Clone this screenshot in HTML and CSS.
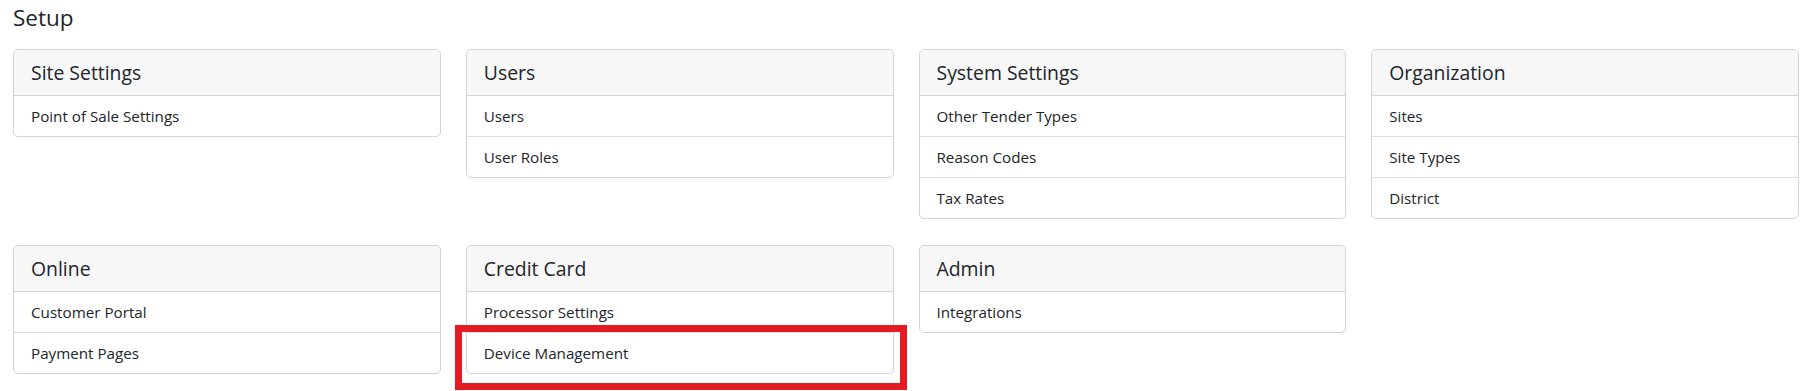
FILE: index.html
```html
<!DOCTYPE html>
<html>
<head>
<meta charset="utf-8">
<link rel="stylesheet" href="styles.css">
</head>
<body>
<div class="page">
  <h1 class="title">Setup</h1>
  <div class="grid">
    <div class="card">
      <div class="card-header">Site Settings</div>
      <ul class="list">
        <li class="item">Point of Sale Settings</li>
      </ul>
    </div>
    <div class="card">
      <div class="card-header">Users</div>
      <ul class="list">
        <li class="item">Users</li>
        <li class="item">User Roles</li>
      </ul>
    </div>
    <div class="card">
      <div class="card-header">System Settings</div>
      <ul class="list">
        <li class="item">Other Tender Types</li>
        <li class="item">Reason Codes</li>
        <li class="item">Tax Rates</li>
      </ul>
    </div>
    <div class="card">
      <div class="card-header">Organization</div>
      <ul class="list">
        <li class="item">Sites</li>
        <li class="item">Site Types</li>
        <li class="item">District</li>
      </ul>
    </div>
    <div class="card">
      <div class="card-header">Online</div>
      <ul class="list">
        <li class="item">Customer Portal</li>
        <li class="item">Payment Pages</li>
      </ul>
    </div>
    <div class="card">
      <div class="card-header">Credit Card</div>
      <ul class="list">
        <li class="item">Processor Settings</li>
        <li class="item item-highlight">Device Management<span class="highlight"></span></li>
      </ul>
    </div>
    <div class="card">
      <div class="card-header">Admin</div>
      <ul class="list">
        <li class="item">Integrations</li>
      </ul>
    </div>
  </div>
</div>
</body>
</html>
```

FILE: styles.css
```css
html, body {
  margin: 0;
  padding: 0;
  background: #ffffff;
}

body {
  font-family: "Open Sans", "Noto Sans", "Liberation Sans", sans-serif;
  color: #212529;
}

.page {
  padding: 0 14px 0 13px;
  min-height: 391px;
  box-sizing: border-box;
}

.title {
  margin: 0;
  padding: 4px 0 0 0;
  height: 49px;
  box-sizing: border-box;
  font-size: 22.5px;
  font-weight: 400;
  line-height: 28px;
}

.grid {
  display: grid;
  grid-template-columns: repeat(4, 1fr);
  column-gap: 25px;
  row-gap: 26px;
  align-items: start;
}

.card {
  border: 1px solid #d3d3d3;
  border-radius: 5px;
  background: #fff;
}

.card-header {
  height: 46px;
  box-sizing: border-box;
  display: flex;
  align-items: center;
  padding: 0 17px;
  background: #f7f7f7;
  border-bottom: 1px solid #d3d3d3;
  border-radius: 5px 5px 0 0;
  font-size: 19.4px;
}

.list {
  list-style: none;
  margin: 0;
  padding: 0;
}

.item {
  height: 40px;
  display: flex;
  align-items: center;
  padding: 0 17px;
  font-size: 15.2px;
}

.item + .item {
  border-top: 1px solid #dedede;
}

.item-highlight {
  position: relative;
}

.highlight {
  position: absolute;
  left: -12px;
  right: -14px;
  top: -8px;
  bottom: -17px;
  border: 7px solid #e31b23;
  pointer-events: none;
}
```
